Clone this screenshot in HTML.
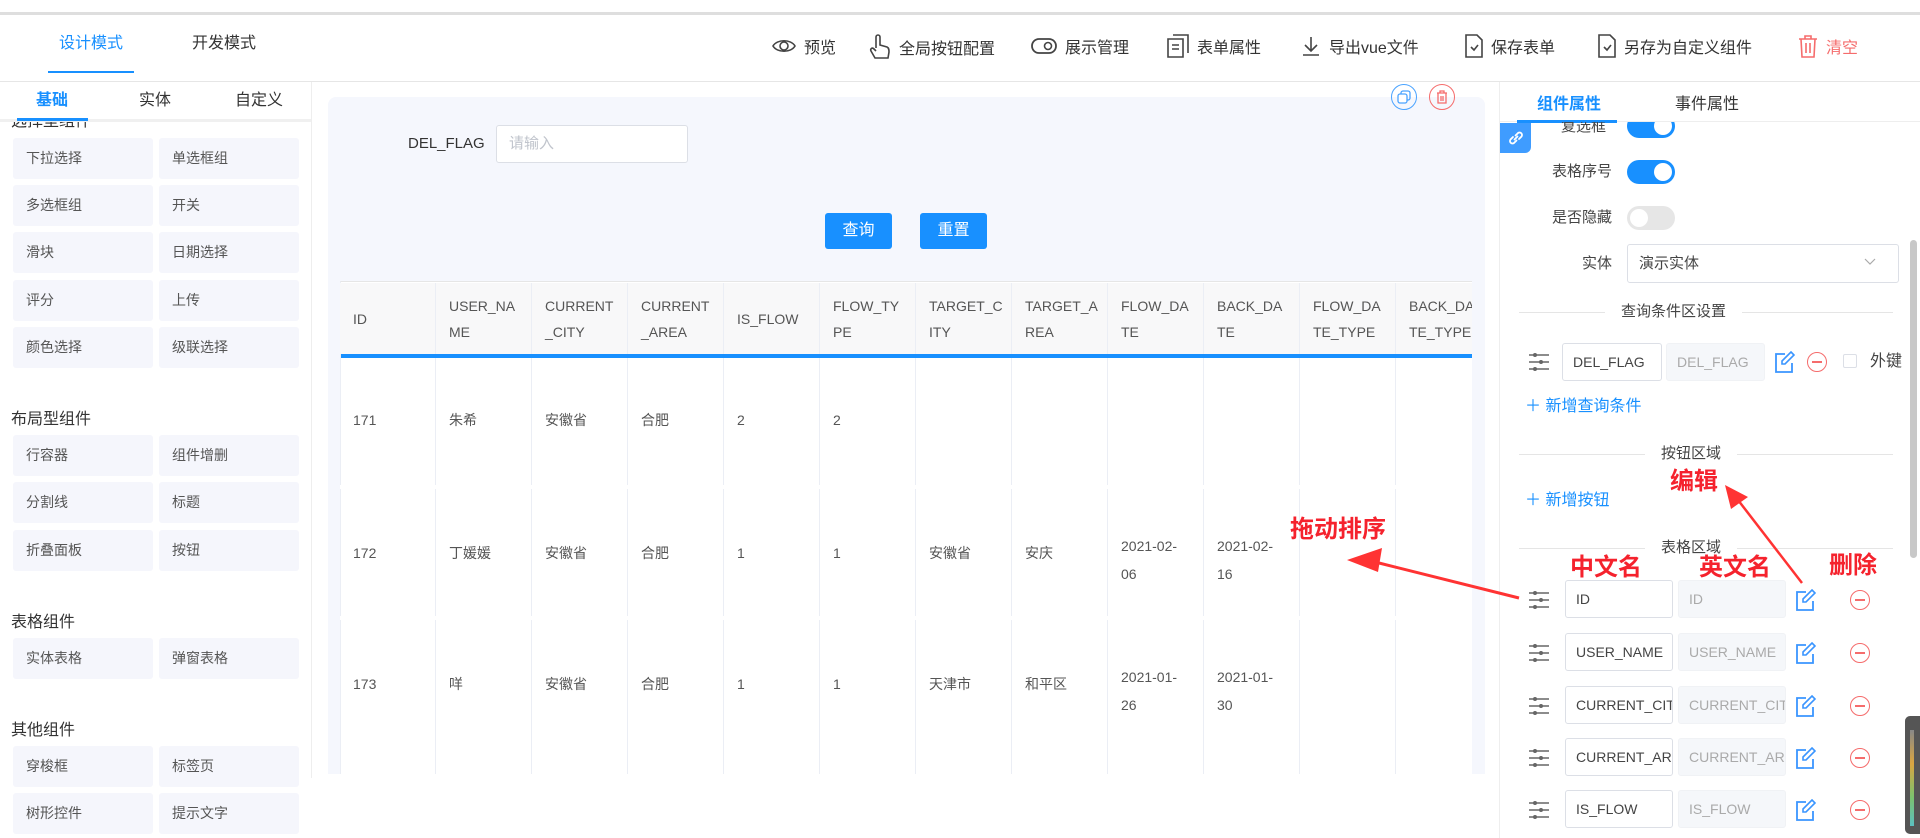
<!DOCTYPE html>
<html><head><meta charset="utf-8"><style>
*{box-sizing:border-box;margin:0;padding:0}
body{width:1920px;height:838px;overflow:hidden;background:#fff;font-family:"Liberation Sans","Noto Sans CJK SC",sans-serif;color:#333;font-size:14px;position:relative}
.a{position:absolute}
.t{position:absolute;white-space:nowrap;line-height:1}
.tb{display:flex;align-items:center;gap:8px;position:absolute;top:34px;font-size:16px;color:#333;white-space:nowrap}
.it{position:absolute;width:140px;height:41px;background:#f5f6fc;border-radius:3px;font-size:14px;color:#555;padding-left:13px;line-height:41px}
.sec{position:absolute;left:11px;font-size:16px;color:#333}
.th,.td{position:absolute;border-right:1px solid #ebeef5;font-size:14px;color:#555;padding-left:13px}
.th{background:#f8f8f9;height:71px;top:283px;line-height:26px;display:flex;flex-direction:column;justify-content:center}
.sw{position:absolute;width:48px;height:24px;border-radius:12px;background:#1890ff}
.sw::after{content:"";position:absolute;right:3px;top:3px;width:18px;height:18px;border-radius:50%;background:#fff}
.sw.off{background:#e6e6e6}.sw.off::after{left:3px;right:auto}
.inp{position:absolute;height:38px;border:1px solid #dcdfe6;border-radius:3px;background:#fff;font-size:14px;color:#444;padding-left:10px;line-height:36px;overflow:hidden;white-space:nowrap}
.inp.g{background:#f5f7fa;border-color:#f0f2f5;color:#aaa}
.div{position:absolute;left:1519px;width:374px;height:1px;background:#e5e5e5}
.dl{position:absolute;background:#fff;padding:0 16px;font-size:15px;color:#444;top:-9px;line-height:18px}
.red{position:absolute;color:#f5222d;font-weight:bold;font-size:24px;white-space:nowrap;line-height:1}
</style></head><body>
<div class="a" style="left:0;top:12px;width:1920px;height:3px;background:#dedede"></div>
<div class="a" style="left:0;top:81px;width:1920px;height:1px;background:#e6e6e6"></div>
<div class="t" style="left:59px;top:36px;font-size:16px;color:#1890ff">设计模式</div>
<div class="a" style="left:48px;top:71px;width:86px;height:2px;background:#1890ff"></div>
<div class="t" style="left:192px;top:36px;font-size:16px">开发模式</div>

<div class="tb" style="left:772px"><svg width="24" height="18" viewBox="0 0 24 18"><path d="M1 9C5 2 19 2 23 9C19 16 5 16 1 9Z" fill="none" stroke="#444" stroke-width="1.6"/><circle cx="12" cy="9" r="4" fill="none" stroke="#444" stroke-width="1.6"/></svg>预览</div>
<div class="tb" style="left:869px"><svg width="22" height="26" viewBox="0 0 22 26"><path d="M7 14V3a2 2 0 0 1 4 0v8l7 2c2 1 2 3 2 5l-1 6H6L2 17c-1-2 1-4 3-2l2 2" fill="none" stroke="#444" stroke-width="1.6"/></svg>全局按钮配置</div>
<div class="tb" style="left:1031px"><svg width="26" height="18" viewBox="0 0 26 18"><rect x="1" y="2" width="24" height="14" rx="7" fill="none" stroke="#444" stroke-width="1.8"/><circle cx="17" cy="9" r="3.5" fill="none" stroke="#444" stroke-width="1.6"/></svg>展示管理</div>
<div class="tb" style="left:1167px"><svg width="22" height="24" viewBox="0 0 22 24"><path d="M6 1h15v18M1 5h15v18H1z M5 11h7M5 15h7" fill="none" stroke="#444" stroke-width="1.6"/></svg>表单属性</div>
<div class="tb" style="left:1301px"><svg width="20" height="22" viewBox="0 0 20 22"><path d="M10 2v13M4 10l6 6 6-6M2 20h16" fill="none" stroke="#444" stroke-width="1.6"/></svg>导出vue文件</div>
<div class="tb" style="left:1465px"><svg width="18" height="24" viewBox="0 0 18 24"><path d="M1 1h11l5 5v17H1z M6 13l3 3 4-5" fill="none" stroke="#444" stroke-width="1.6"/></svg>保存表单</div>
<div class="tb" style="left:1598px"><svg width="18" height="24" viewBox="0 0 18 24"><path d="M1 1h11l5 5v17H1z M6 13l3 3 4-5" fill="none" stroke="#444" stroke-width="1.6"/></svg>另存为自定义组件</div>
<div class="tb" style="left:1798px;color:#f56c6c"><svg width="20" height="24" viewBox="0 0 20 24"><path d="M1 5h18M7 5V2h6v3M3 5l1 18h12l1-18M8 9v10M12 9v10" fill="none" stroke="#f56c6c" stroke-width="1.6"/></svg>清空</div>

<!-- left panel -->
<div class="a" style="left:311px;top:82px;width:1px;height:696px;background:#eee"></div>
<div class="a" style="left:0;top:122px;width:311px;height:716px;overflow:hidden">
  <div class="sec" style="top:-15px">选择型组件</div>
</div>
<div class="t" style="left:36px;top:93px;font-size:16px;color:#1890ff;font-weight:bold">基础</div>
<div class="t" style="left:139px;top:93px;font-size:16px">实体</div>
<div class="t" style="left:235px;top:93px;font-size:16px">自定义</div>
<div class="a" style="left:0;top:119px;width:311px;height:3px;background:#f0f0f0"></div>
<div class="a" style="left:17px;top:118px;width:71px;height:3px;background:#1890ff"></div>

<div class="it" style="left:13px;top:138px">下拉选择</div><div class="it" style="left:159px;top:138px">单选框组</div>
<div class="it" style="left:13px;top:185px">多选框组</div><div class="it" style="left:159px;top:185px">开关</div>
<div class="it" style="left:13px;top:232px">滑块</div><div class="it" style="left:159px;top:232px">日期选择</div>
<div class="it" style="left:13px;top:280px">评分</div><div class="it" style="left:159px;top:280px">上传</div>
<div class="it" style="left:13px;top:327px">颜色选择</div><div class="it" style="left:159px;top:327px">级联选择</div>
<div class="sec" style="top:405px">布局型组件</div>
<div class="it" style="left:13px;top:435px">行容器</div><div class="it" style="left:159px;top:435px">组件增删</div>
<div class="it" style="left:13px;top:482px">分割线</div><div class="it" style="left:159px;top:482px">标题</div>
<div class="it" style="left:13px;top:530px">折叠面板</div><div class="it" style="left:159px;top:530px">按钮</div>
<div class="sec" style="top:608px">表格组件</div>
<div class="it" style="left:13px;top:638px">实体表格</div><div class="it" style="left:159px;top:638px">弹窗表格</div>
<div class="sec" style="top:716px">其他组件</div>
<div class="it" style="left:13px;top:746px">穿梭框</div><div class="it" style="left:159px;top:746px">标签页</div>
<div class="it" style="left:13px;top:793px">树形控件</div><div class="it" style="left:159px;top:793px">提示文字</div>

<!-- middle -->
<div class="a" style="left:312px;top:82px;width:1187px;height:692px;overflow:hidden">
 <div class="a" style="left:16px;top:15px;width:1157px;height:700px;background:#f5f7fd;border-radius:8px"></div>
</div>
<div class="a" style="left:1391px;top:84px;width:26px;height:26px;border:1px solid #4aa3ff;border-radius:50%"></div>
<svg class="a" style="left:1397px;top:90px" width="14" height="14" viewBox="0 0 14 14"><rect x="4" y="1" width="9" height="9" rx="2" fill="none" stroke="#4aa3ff" stroke-width="1.3"/><rect x="1" y="4" width="9" height="9" rx="2" fill="#fff" stroke="#4aa3ff" stroke-width="1.3"/></svg>
<div class="a" style="left:1429px;top:84px;width:26px;height:26px;border:1px solid #f56c6c;border-radius:50%"></div>
<svg class="a" style="left:1436px;top:90px" width="12" height="14" viewBox="0 0 12 14"><path d="M1 3h10M4 3V1h4v2M2 3v10h8V3M5 6v5M7 6v5" fill="none" stroke="#f56c6c" stroke-width="1.3"/></svg>

<div class="t" style="left:408px;top:136px;font-size:15px">DEL_FLAG</div>
<div class="a" style="left:496px;top:125px;width:192px;height:38px;background:#fff;border:1px solid #dcdfe6;border-radius:3px;color:#c0c4cc;font-size:15px;padding-left:12px;line-height:36px">请输入</div>
<div class="a" style="left:825px;top:213px;width:67px;height:36px;background:#1890ff;border-radius:3px;color:#fff;font-size:16px;text-align:center;line-height:36px">查询</div>
<div class="a" style="left:920px;top:213px;width:67px;height:36px;background:#1890ff;border-radius:3px;color:#fff;font-size:16px;text-align:center;line-height:36px">重置</div>

<div class="a" style="left:340px;top:281px;width:1132px;height:493px;overflow:hidden;background:#fff;border-left:1px solid #ebeef5;border-top:1px solid #e6e6e6">
 <div class="a" style="left:0;top:72px;width:1132px;height:4px;background:#1890ff"></div>
 <div class="a" style="left:0;top:206px;width:1132px;height:4px;background:#fff"></div>
</div>
<div style="position:absolute;left:340px;top:0;width:1132px;height:774px;overflow:hidden">
<div class="th" style="left:0;width:96px">ID</div>
<div class="th" style="left:96px;width:96px">USER_NA<br>ME</div>
<div class="th" style="left:192px;width:96px">CURRENT<br>_CITY</div>
<div class="th" style="left:288px;width:96px">CURRENT<br>_AREA</div>
<div class="th" style="left:384px;width:96px">IS_FLOW</div>
<div class="th" style="left:480px;width:96px">FLOW_TY<br>PE</div>
<div class="th" style="left:576px;width:96px">TARGET_C<br>ITY</div>
<div class="th" style="left:672px;width:96px">TARGET_A<br>REA</div>
<div class="th" style="left:768px;width:96px">FLOW_DA<br>TE</div>
<div class="th" style="left:864px;width:96px">BACK_DA<br>TE</div>
<div class="th" style="left:960px;width:96px">FLOW_DA<br>TE_TYPE</div>
<div class="th" style="left:1056px;width:96px">BACK_DA<br>TE_TYPE</div>
</div>
<div style="position:absolute;left:340px;top:358px;width:1132px;height:416px;overflow:hidden">
 <div class="a" style="left:95px;top:0;width:1px;height:416px;background:#ebeef5"></div>
 <div class="a" style="left:191px;top:0;width:1px;height:416px;background:#ebeef5"></div>
 <div class="a" style="left:287px;top:0;width:1px;height:416px;background:#ebeef5"></div>
 <div class="a" style="left:383px;top:0;width:1px;height:416px;background:#ebeef5"></div>
 <div class="a" style="left:479px;top:0;width:1px;height:416px;background:#ebeef5"></div>
 <div class="a" style="left:575px;top:0;width:1px;height:416px;background:#ebeef5"></div>
 <div class="a" style="left:671px;top:0;width:1px;height:416px;background:#ebeef5"></div>
 <div class="a" style="left:767px;top:0;width:1px;height:416px;background:#ebeef5"></div>
 <div class="a" style="left:863px;top:0;width:1px;height:416px;background:#ebeef5"></div>
 <div class="a" style="left:959px;top:0;width:1px;height:416px;background:#ebeef5"></div>
 <div class="a" style="left:1055px;top:0;width:1px;height:416px;background:#ebeef5"></div>
 <div class="a" style="left:1151px;top:0;width:1px;height:416px;background:#ebeef5"></div>
 <div class="a" style="left:0;top:127px;width:1132px;height:4px;background:#fff"></div>
 <div class="a" style="left:0;top:258px;width:1132px;height:4px;background:#fff"></div>
</div>
<div style="font-size:14px;color:#555">
<div class="t" style="left:353px;top:413px">171</div><div class="t" style="left:449px;top:413px">朱希</div><div class="t" style="left:545px;top:413px">安徽省</div><div class="t" style="left:641px;top:413px">合肥</div><div class="t" style="left:737px;top:413px">2</div><div class="t" style="left:833px;top:413px">2</div>
<div class="t" style="left:353px;top:546px">172</div><div class="t" style="left:449px;top:546px">丁媛媛</div><div class="t" style="left:545px;top:546px">安徽省</div><div class="t" style="left:641px;top:546px">合肥</div><div class="t" style="left:737px;top:546px">1</div><div class="t" style="left:833px;top:546px">1</div><div class="t" style="left:929px;top:546px">安徽省</div><div class="t" style="left:1025px;top:546px">安庆</div>
<div class="t" style="left:1121px;top:532px;line-height:28px">2021-02-<br>06</div><div class="t" style="left:1217px;top:532px;line-height:28px">2021-02-<br>16</div>
<div class="t" style="left:353px;top:677px">173</div><div class="t" style="left:449px;top:677px">咩</div><div class="t" style="left:545px;top:677px">安徽省</div><div class="t" style="left:641px;top:677px">合肥</div><div class="t" style="left:737px;top:677px">1</div><div class="t" style="left:833px;top:677px">1</div><div class="t" style="left:929px;top:677px">天津市</div><div class="t" style="left:1025px;top:677px">和平区</div>
<div class="t" style="left:1121px;top:663px;line-height:28px">2021-01-<br>26</div><div class="t" style="left:1217px;top:663px;line-height:28px">2021-01-<br>30</div>
</div>

<!-- right panel -->
<div class="a" style="left:1499px;top:82px;width:1px;height:756px;background:#eee"></div>
<div class="a" style="left:1500px;top:121px;width:420px;height:1px;background:#eee"></div>
<div class="t" style="left:1537px;top:97px;font-size:16px;color:#1890ff;font-weight:bold">组件属性</div>
<div class="t" style="left:1675px;top:97px;font-size:16px">事件属性</div>
<div class="a" style="left:1517px;top:120px;width:100px;height:3px;background:#1890ff"></div>
<div class="a" style="left:1500px;top:122px;width:420px;height:716px;overflow:hidden">
  <div class="t" style="left:61px;top:-3px;font-size:15px;color:#444">复选框</div>
  <div class="sw" style="left:127px;top:-8px"></div>
</div>
<div class="a" style="left:1500px;top:123px;width:31px;height:30px;background:#3f9cff;border-radius:0 0 6px 0"></div>
<svg class="a" style="left:1507px;top:129px" width="18" height="18" viewBox="0 0 18 18"><path d="M7.5 10.5l3-3M6 8l-2.5 2.5a2.5 2.5 0 0 0 3.5 3.5L9.5 11.5M12 10l2.5-2.5a2.5 2.5 0 0 0-3.5-3.5L8.5 6.5" fill="none" stroke="#fff" stroke-width="1.8" stroke-linecap="round"/></svg>
<div class="t" style="left:1552px;top:164px;font-size:15px;color:#444">表格序号</div>
<div class="sw" style="left:1627px;top:160px"></div>
<div class="t" style="left:1552px;top:210px;font-size:15px;color:#444">是否隐藏</div>
<div class="sw off" style="left:1627px;top:206px"></div>
<div class="t" style="left:1582px;top:256px;font-size:15px;color:#444">实体</div>
<div class="a" style="left:1627px;top:244px;width:272px;height:39px;border:1px solid #dcdfe6;border-radius:3px;font-size:15px;color:#444;padding-left:11px;line-height:37px">演示实体</div>
<svg class="a" style="left:1864px;top:258px" width="12" height="8" viewBox="0 0 12 8"><path d="M1 1l5 5 5-5" fill="none" stroke="#aaa" stroke-width="1.2"/></svg>

<div class="div" style="top:312px"><div class="dl" style="left:86px">查询条件区设置</div></div>
<svg class="a" style="left:1528px;top:352px" width="22" height="20" viewBox="0 0 22 20"><path d="M1 3h20M1 10h20M1 17h20" stroke="#666" stroke-width="1.6"/><circle cx="7" cy="3" r="2" fill="#666"/><circle cx="13" cy="10" r="2" fill="#666"/><circle cx="7" cy="17" r="2" fill="#666"/></svg>
<div class="inp" style="left:1562px;top:343px;width:100px">DEL_FLAG</div>
<div class="inp g" style="left:1666px;top:343px;width:99px">DEL_FLAG</div>
<svg class="a" style="left:1774px;top:351px" width="21" height="22" viewBox="0 0 21 22"><path d="M11 3H2v18h16v-9" fill="none" stroke="#3a95ff" stroke-width="1.8"/><path d="M17 1l3 3-9 9H8v-3z" fill="none" stroke="#3a95ff" stroke-width="1.6"/></svg>
<div class="a" style="left:1807px;top:352px;width:20px;height:20px;border:1.6px solid #f56c6c;border-radius:50%"></div><div class="a" style="left:1812px;top:361px;width:10px;height:2px;background:#f56c6c"></div>
<div class="a" style="left:1843px;top:354px;width:14px;height:14px;border:1px solid #dcdfe6;border-radius:2px"></div>
<div class="t" style="left:1870px;top:354px;font-size:16px;color:#444">外键</div>
<div class="t" style="left:1525px;top:399px;font-size:16px;color:#1890ff">＋ 新增查询条件</div>

<div class="div" style="top:454px"><div class="dl" style="left:126px">按钮区域</div></div>
<div class="t" style="left:1525px;top:493px;font-size:16px;color:#1890ff">＋ 新增按钮</div>
<div class="div" style="top:548px"><div class="dl" style="left:126px">表格区域</div></div>

<div>
<svg class="a" style="left:1528px;top:590px" width="22" height="20" viewBox="0 0 22 20"><path d="M1 3h20M1 10h20M1 17h20" stroke="#666" stroke-width="1.6"/><circle cx="7" cy="3" r="2" fill="#666"/><circle cx="13" cy="10" r="2" fill="#666"/><circle cx="7" cy="17" r="2" fill="#666"/></svg>
<div class="inp" style="left:1565px;top:580px;width:108px">ID</div><div class="inp g" style="left:1678px;top:580px;width:108px">ID</div>
<svg class="a" style="left:1795px;top:589px" width="21" height="22" viewBox="0 0 21 22"><path d="M11 3H2v18h16v-9" fill="none" stroke="#3a95ff" stroke-width="1.8"/><path d="M17 1l3 3-9 9H8v-3z" fill="none" stroke="#3a95ff" stroke-width="1.6"/></svg>
<div class="a" style="left:1850px;top:590px;width:20px;height:20px;border:1.6px solid #f56c6c;border-radius:50%"></div><div class="a" style="left:1855px;top:599px;width:10px;height:2px;background:#f56c6c"></div>

<svg class="a" style="left:1528px;top:643px" width="22" height="20" viewBox="0 0 22 20"><path d="M1 3h20M1 10h20M1 17h20" stroke="#666" stroke-width="1.6"/><circle cx="7" cy="3" r="2" fill="#666"/><circle cx="13" cy="10" r="2" fill="#666"/><circle cx="7" cy="17" r="2" fill="#666"/></svg>
<div class="inp" style="left:1565px;top:633px;width:108px">USER_NAME</div><div class="inp g" style="left:1678px;top:633px;width:108px">USER_NAME</div>
<svg class="a" style="left:1795px;top:642px" width="21" height="22" viewBox="0 0 21 22"><path d="M11 3H2v18h16v-9" fill="none" stroke="#3a95ff" stroke-width="1.8"/><path d="M17 1l3 3-9 9H8v-3z" fill="none" stroke="#3a95ff" stroke-width="1.6"/></svg>
<div class="a" style="left:1850px;top:643px;width:20px;height:20px;border:1.6px solid #f56c6c;border-radius:50%"></div><div class="a" style="left:1855px;top:652px;width:10px;height:2px;background:#f56c6c"></div>

<svg class="a" style="left:1528px;top:696px" width="22" height="20" viewBox="0 0 22 20"><path d="M1 3h20M1 10h20M1 17h20" stroke="#666" stroke-width="1.6"/><circle cx="7" cy="3" r="2" fill="#666"/><circle cx="13" cy="10" r="2" fill="#666"/><circle cx="7" cy="17" r="2" fill="#666"/></svg>
<div class="inp" style="left:1565px;top:686px;width:108px">CURRENT_CITY</div><div class="inp g" style="left:1678px;top:686px;width:108px">CURRENT_CITY</div>
<svg class="a" style="left:1795px;top:695px" width="21" height="22" viewBox="0 0 21 22"><path d="M11 3H2v18h16v-9" fill="none" stroke="#3a95ff" stroke-width="1.8"/><path d="M17 1l3 3-9 9H8v-3z" fill="none" stroke="#3a95ff" stroke-width="1.6"/></svg>
<div class="a" style="left:1850px;top:696px;width:20px;height:20px;border:1.6px solid #f56c6c;border-radius:50%"></div><div class="a" style="left:1855px;top:705px;width:10px;height:2px;background:#f56c6c"></div>

<svg class="a" style="left:1528px;top:748px" width="22" height="20" viewBox="0 0 22 20"><path d="M1 3h20M1 10h20M1 17h20" stroke="#666" stroke-width="1.6"/><circle cx="7" cy="3" r="2" fill="#666"/><circle cx="13" cy="10" r="2" fill="#666"/><circle cx="7" cy="17" r="2" fill="#666"/></svg>
<div class="inp" style="left:1565px;top:738px;width:108px">CURRENT_AREA</div><div class="inp g" style="left:1678px;top:738px;width:108px">CURRENT_AREA</div>
<svg class="a" style="left:1795px;top:747px" width="21" height="22" viewBox="0 0 21 22"><path d="M11 3H2v18h16v-9" fill="none" stroke="#3a95ff" stroke-width="1.8"/><path d="M17 1l3 3-9 9H8v-3z" fill="none" stroke="#3a95ff" stroke-width="1.6"/></svg>
<div class="a" style="left:1850px;top:748px;width:20px;height:20px;border:1.6px solid #f56c6c;border-radius:50%"></div><div class="a" style="left:1855px;top:757px;width:10px;height:2px;background:#f56c6c"></div>

<svg class="a" style="left:1528px;top:800px" width="22" height="20" viewBox="0 0 22 20"><path d="M1 3h20M1 10h20M1 17h20" stroke="#666" stroke-width="1.6"/><circle cx="7" cy="3" r="2" fill="#666"/><circle cx="13" cy="10" r="2" fill="#666"/><circle cx="7" cy="17" r="2" fill="#666"/></svg>
<div class="inp" style="left:1565px;top:790px;width:108px">IS_FLOW</div><div class="inp g" style="left:1678px;top:790px;width:108px">IS_FLOW</div>
<svg class="a" style="left:1795px;top:799px" width="21" height="22" viewBox="0 0 21 22"><path d="M11 3H2v18h16v-9" fill="none" stroke="#3a95ff" stroke-width="1.8"/><path d="M17 1l3 3-9 9H8v-3z" fill="none" stroke="#3a95ff" stroke-width="1.6"/></svg>
<div class="a" style="left:1850px;top:800px;width:20px;height:20px;border:1.6px solid #f56c6c;border-radius:50%"></div><div class="a" style="left:1855px;top:809px;width:10px;height:2px;background:#f56c6c"></div>
</div>

<div class="a" style="left:1910px;top:240px;width:7px;height:318px;background:#c8c8c8;border-radius:4px"></div>
<div class="a" style="left:1905px;top:716px;width:15px;height:118px;background:#555;border-radius:5px 0 0 5px"></div>
<div class="a" style="left:1910px;top:730px;width:4px;height:96px;background:linear-gradient(#888,#d9a441 35%,#7cc36e 70%,#5bc0c0)"></div>

<!-- annotations -->
<div class="red" style="left:1290px;top:518px">拖动排序</div>
<div class="red" style="left:1670px;top:470px">编辑</div>
<div class="red" style="left:1570px;top:556px">中文名</div>
<div class="red" style="left:1699px;top:556px">英文名</div>
<div class="red" style="left:1829px;top:554px">删除</div>
<svg class="a" style="left:0;top:0" width="1920" height="838">
<path d="M1519 598L1375 562" stroke="#f33" stroke-width="3"/>
<polygon points="1347,560 1382,548 1378,572" fill="#f33"/>
<path d="M1802 583L1738 500" stroke="#f33" stroke-width="2.5"/>
<polygon points="1725,485 1748,497 1731,509" fill="#f33"/>
</svg>
</body></html>
